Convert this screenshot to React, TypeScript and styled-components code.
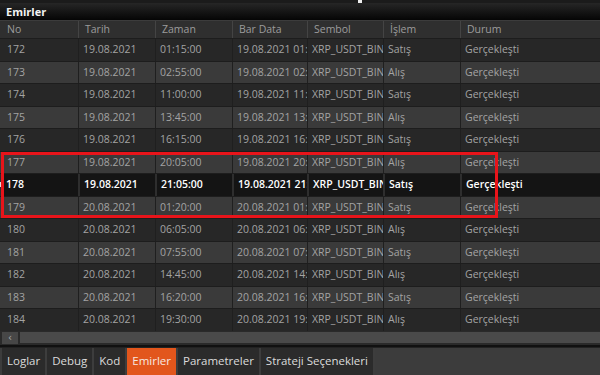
import React from "react";
import styled, { createGlobalStyle } from "styled-components";

const Global = createGlobalStyle`
  html, body { margin: 0; padding: 0; background: #111; }
  body { font-family: "Open Sans", "Noto Sans", sans-serif; }
`;

const Frame = styled.div`
  position: relative;
  width: 600px;
  height: 375px;
  overflow: hidden;
  background: #111;
  display: flex;
  flex-direction: column;
`;

const TopStrip = styled.div`
  height: 3px;
  background: #1b1b1b;
  position: relative;
`;

const Blip = styled.span`
  position: absolute;
  left: 358px;
  top: 0;
  width: 4px;
  height: 3px;
  background: #eee;
`;

const TitleBar = styled.div`
  height: 17px;
  background: linear-gradient(#262626, #050505);
  color: #f2f2f2;
  font-weight: 700;
  font-size: 11px;
  line-height: 17px;
  padding-left: 6px;
`;

const cols = "78px 77px 77px 75px 76px 77px 1fr";

const Header = styled.div`
  display: grid;
  grid-template-columns: ${cols};
  height: 18px;
  background: #2f2f2f;
  border-top: 1px solid #3c3c3c;
  box-sizing: border-box;
`;

const HeadCell = styled.div`
  color: #9c9c9c;
  font-size: 10.5px;
  line-height: 17px;
  padding-left: 6px;
  border-left: 1px solid #444;
  white-space: nowrap;
  overflow: hidden;
  &:first-child { border-left: none; padding-left: 7px; }
`;

const Body = styled.div`
  display: flex;
  flex-direction: column;
`;

const Row = styled.div<{ $light: boolean; $sel: boolean }>`
  display: grid;
  grid-template-columns: ${cols};
  height: 22.5px;
  box-sizing: border-box;
  border-top: 1px solid #1d1d1d;
  background: ${(p) => (p.$sel ? "#141414" : p.$light ? "#3a3a3a" : "#272727")};
  color: ${(p) => (p.$sel ? "#ffffff" : "#a3a3a3")};
  font-weight: ${(p) => (p.$sel ? 600 : 400)};
  position: relative;
`;

const Cell = styled.div<{ $sel: boolean }>`
  font-size: 10.5px;
  line-height: 21px;
  padding-left: 4px;
  white-space: nowrap;
  overflow: hidden;
  text-overflow: clip;
  border-left: ${(p) => (p.$sel ? "2px solid #2e2e2e" : "1px solid #1f1f1f")};
  &:first-child { border-left: none; padding-left: 7px; }
`;

const Marker = styled.span`
  position: absolute;
  left: 0;
  top: 8px;
  width: 2px;
  height: 5px;
  background: #ddd;
`;

const ScrollRow = styled.div`
  height: 14px;
  background: #2a2a2a;
  display: flex;
  align-items: center;
  gap: 2px;
  padding: 0 0 0 2px;
`;

const ScrollBtn = styled.div`
  width: 16px;
  height: 12px;
  background: #474747;
  color: #aaa;
  font-size: 10px;
  line-height: 12px;
  text-align: center;
  font-family: "DejaVu Sans", sans-serif;
`;

const Thumb = styled.div`
  flex: 1;
  height: 11px;
  background: #4a4a4a;
`;

const Tabs = styled.div`
  height: 28px;
  margin-top: 2px;
  display: flex;
  background: #3c3c3c;
  border-top: 1px solid #222;
  padding-left: 2px;
  box-sizing: border-box;
`;

const Tab = styled.div<{ $active?: boolean }>`
  padding: 0 5px 0 5px;
  background: ${(p) => (p.$active ? "#e2561c" : "#2b2b2b")};
  color: ${(p) => (p.$active ? "#f7e8e0" : "#dcdcdc")};
  font-size: 11.5px;
  line-height: 26px;
  border-right: 2px solid #3d3d3d;
  white-space: nowrap;
`;

const Bottom = styled.div`
  flex: 1;
  background: #0e0e0e;
`;

const RedBox = styled.div`
  position: absolute;
  left: 1px;
  top: 152px;
  width: 497px;
  height: 66px;
  border: 3px solid #e8141a;
  box-sizing: border-box;
  pointer-events: none;
`;

type R = [string, string, string, string];
const rows: R[] = [
  ["172", "19.08.2021", "01:15:00", "Satış"],
  ["173", "19.08.2021", "02:55:00", "Alış"],
  ["174", "19.08.2021", "11:00:00", "Satış"],
  ["175", "19.08.2021", "13:45:00", "Alış"],
  ["176", "19.08.2021", "16:15:00", "Satış"],
  ["177", "19.08.2021", "20:05:00", "Alış"],
  ["178", "19.08.2021", "21:05:00", "Satış"],
  ["179", "20.08.2021", "01:20:00", "Satış"],
  ["180", "20.08.2021", "06:05:00", "Alış"],
  ["181", "20.08.2021", "07:55:00", "Satış"],
  ["182", "20.08.2021", "14:45:00", "Alış"],
  ["183", "20.08.2021", "16:20:00", "Satış"],
  ["184", "20.08.2021", "19:30:00", "Alış"],
];

const heads = ["No", "Tarih", "Zaman", "Bar Data", "Sembol", "İşlem", "Durum"];
const tabs = ["Loglar", "Debug", "Kod", "Emirler", "Parametreler", "Strateji Seçenekleri"];

export default function App() {
  return (
    <>
      <Global />
      <Frame>
        <TopStrip>
          <Blip />
        </TopStrip>
        <TitleBar>Emirler</TitleBar>
        <Header>
          {heads.map((h) => (
            <HeadCell key={h}>{h}</HeadCell>
          ))}
        </Header>
        <Body>
          {rows.map((r) => {
            const n = parseInt(r[0], 10);
            const sel = n === 178;
            const vals = [r[0], r[1], r[2], `${r[1]} ${r[2]}`, "XRP_USDT_BINANCE", r[3], "Gerçekleşti"];
            return (
              <Row key={r[0]} $light={n % 2 === 1} $sel={sel}>
                {sel && <Marker />}
                {vals.map((v, i) => (
                  <Cell key={i} $sel={sel}>{v}</Cell>
                ))}
              </Row>
            );
          })}
        </Body>
        <ScrollRow>
          <ScrollBtn>‹</ScrollBtn>
          <Thumb />
        </ScrollRow>
        <Tabs>
          {tabs.map((t) => (
            <Tab key={t} $active={t === "Emirler"}>{t}</Tab>
          ))}
        </Tabs>
        <Bottom />
        <RedBox />
      </Frame>
    </>
  );
}
